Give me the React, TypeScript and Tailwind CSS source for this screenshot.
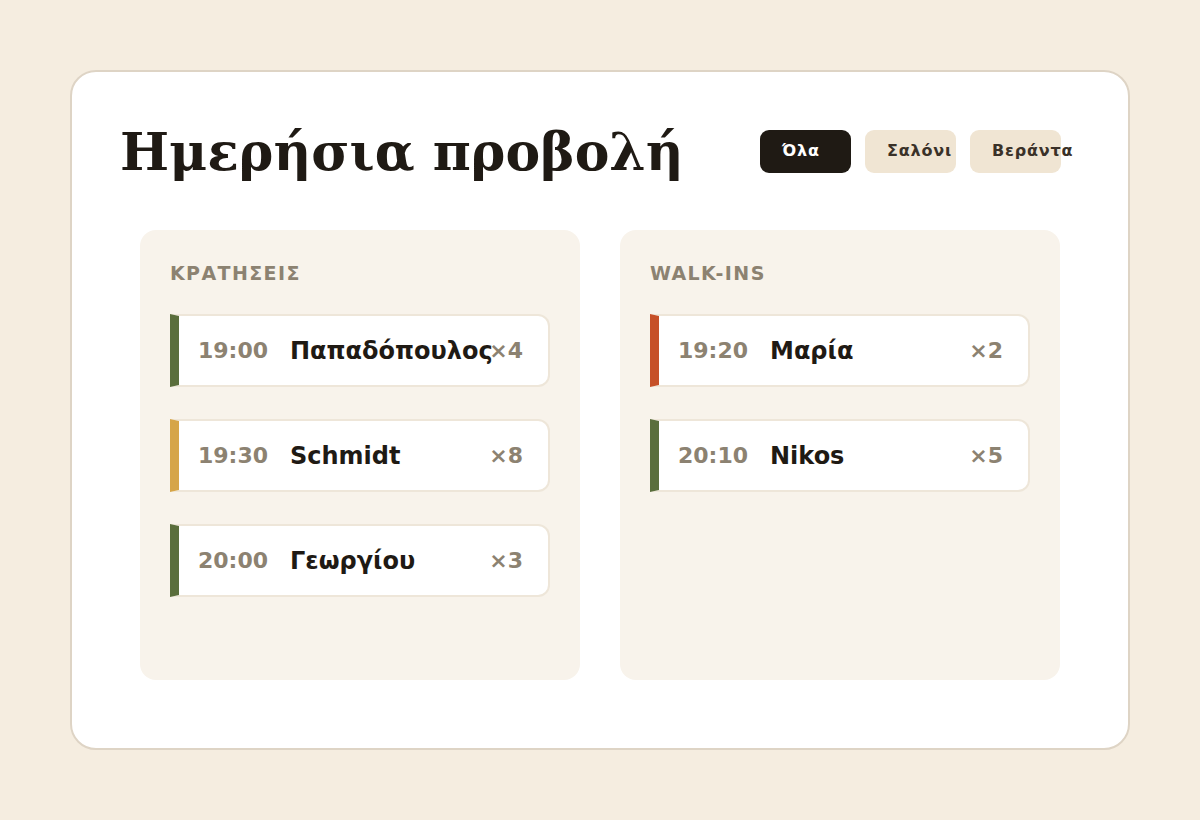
type Entry = {
  id: string;
  time: string;
  name: string;
  party: number;
  tone: 'olive' | 'gold' | 'rust';
};

const bookings: Entry[] = [
  { id: 'b1', time: '19:00', name: 'Παπαδόπουλος', party: 4, tone: 'olive' },
  { id: 'b2', time: '19:30', name: 'Schmidt', party: 8, tone: 'gold' },
  { id: 'b3', time: '20:00', name: 'Γεωργίου', party: 3, tone: 'olive' },
];

const walkIns: Entry[] = [
  { id: 'w1', time: '19:20', name: 'Μαρία', party: 2, tone: 'rust' },
  { id: 'w2', time: '20:10', name: 'Nikos', party: 5, tone: 'olive' },
];

const toneClass = {
  olive: 'border-l-[#5a6e3c]',
  gold: 'border-l-[#d6a548]',
  rust: 'border-l-[#c65028]',
};

const filters = ['Όλα', 'Σαλόνι', 'Βεράντα'];

function Row({ entry }: { entry: Entry }) {
  return (
    <div
      className={`flex items-center h-[73px] pl-[19px] pr-[25px] bg-white border-2 border-[#eee6d9] border-l-[9px] rounded-r-[12px] ${toneClass[entry.tone]}`}
    >
      <span className="w-[92px] shrink-0 text-[22px] font-bold text-[#8c8271]">{entry.time}</span>
      <span className="flex-1 min-w-0 whitespace-nowrap text-[24px] font-bold text-[#1f1a14]">{entry.name}</span>
      <span className="text-[22px] font-bold text-[#8c8271]">×{entry.party}</span>
    </div>
  );
}

function Column({ title, entries }: { title: string; entries: Entry[] }) {
  return (
    <section className="bg-[#f8f3eb] rounded-[16px] px-[30px] pt-[30px] h-[450px]">
      <h2 className="text-[19px] font-bold tracking-[1.4px] text-[#8c8271] leading-[26px]">{title}</h2>
      <div className="mt-[28px] flex flex-col gap-[32px]">
        {entries.map(e => (
          <Row key={e.id} entry={e} />
        ))}
      </div>
    </section>
  );
}

export default function App() {
  return (
    <div
      className="min-h-screen bg-[#f5ede0] px-[70px] pt-[70px] pb-[70px]"
      style={{ fontFamily: '"DejaVu Sans", Verdana, sans-serif' }}
    >
      <div className="h-[680px] bg-white border-2 border-[#ded4c5] rounded-[26px] px-[48px] pt-[48px]">
        {/* header */}
        <div className="flex items-center justify-between pr-[19px] h-[64px]">
          <h1 className="text-[52px] font-bold text-[#1f1a14] leading-none" style={{ fontFamily: '"DejaVu Serif", "Liberation Serif", serif' }}>
            Ημερήσια προβολή
          </h1>
          <div className="flex gap-[14px] mt-[-2px]">
            {filters.map((f, i) => (
              <button
                key={f}
                className={`w-[91px] h-[43px] rounded-[9px] pl-[22px] text-left whitespace-nowrap text-[16px] tracking-[0.8px] font-bold ${
                  i === 0 ? 'bg-[#1f1a14] text-white' : 'bg-[#f0e5d3] text-[#3a3128]'
                }`}
              >
                {f}
              </button>
            ))}
          </div>
        </div>

        {/* columns */}
        <div className="mt-[46px] px-[20px] grid grid-cols-2 gap-[40px]">
          <Column title="ΚΡΑΤΗΣΕΙΣ" entries={bookings} />
          <Column title="WALK-INS" entries={walkIns} />
        </div>
      </div>
    </div>
  );
}
